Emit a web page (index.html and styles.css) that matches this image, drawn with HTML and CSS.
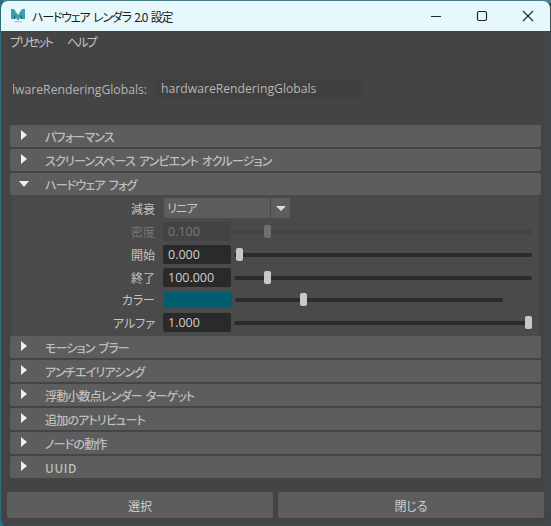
FILE: index.html
```html
<!DOCTYPE html>
<html lang="ja">
<head>
    <meta charset="UTF-8">
    <meta name="viewport" content="width=device-width, initial-scale=1.0">
    <title>ハードウェア レンダラ 2.0 設定</title>
    <link rel="stylesheet" href="styles.css">
</head>
<body>
    <div class="ventana">
        <div class="titulo">
            <svg class="logo" width="14" height="14" viewBox="0 0 14 14">
                <path d="M0 0h3l4 6 4-6h3v10h-3V5L7 10.500 3 5v5H0z" fill="#35a3a8"/>
                <path d="M3 5l4 5.500L11 5v5H9.500V8L7 11.500 4.500 8v2H3z" fill="#1c6374"/>
                <rect x="3" y="12" width="8" height="1.500" fill="#a6d2d4"/>
            </svg>
            <span class="titulo-texto">ハードウェア レンダラ 2.0 設定</span>
            <div class="controles">
                <svg width="12" height="12" viewBox="0 0 12 12"><path d="M1 6.500h10" stroke="#222" stroke-width="1.200"/></svg>
                <svg width="12" height="12" viewBox="0 0 12 12"><rect x="1.500" y="1.500" width="9" height="9" rx="1.500" fill="none" stroke="#222" stroke-width="1.200"/></svg>
                <svg width="12" height="12" viewBox="0 0 12 12"><path d="M1 1l10 10M11 1L1 11" stroke="#222" stroke-width="1.100"/></svg>
            </div>
        </div>

        <div class="menu">
            <span>プリセット</span>
            <span>ヘルプ</span>
        </div>

        <div class="nodo">
            <span class="nodo-label"><span>hardwareRenderingGlobals:</span></span>
            <span class="nodo-campo">hardwareRenderingGlobals</span>
        </div>

        <div class="secciones">
            <div class="cabecera"><i class="flecha"></i>パフォーマンス</div>
            <div class="cabecera"><i class="flecha"></i>スクリーンスペース アンビエント オクルージョン</div>
            <div class="cabecera"><i class="flecha abierta"></i>ハードウェア フォグ</div>
            <div class="cuerpo">
                <div class="fila fila-combo">
                    <label>減衰</label>
                    <div class="combo">リニア</div>
                    <div class="combo-boton"><i class="flecha-mini"></i></div>
                </div>
                <div class="fila apagada">
                    <label>密度</label>
                    <div class="campo">0.100</div>
                    <div class="pista"><i class="mando mando-28"></i></div>
                </div>
                <div class="fila">
                    <label>開始</label>
                    <div class="campo">0.000</div>
                    <div class="pista"><i class="mando mando-0"></i></div>
                </div>
                <div class="fila">
                    <label>終了</label>
                    <div class="campo">100.000</div>
                    <div class="pista"><i class="mando mando-28"></i></div>
                </div>
                <div class="fila fila-color">
                    <label>カラー</label>
                    <div class="muestra"></div>
                    <div class="pista pista-corta"><i class="mando mando-color"></i></div>
                </div>
                <div class="fila fila-alfa">
                    <label>アルファ</label>
                    <div class="campo">1.000</div>
                    <div class="pista"><i class="mando mando-100"></i></div>
                </div>
            </div>
            <div class="cabecera"><i class="flecha"></i>モーション ブラー</div>
            <div class="cabecera"><i class="flecha"></i>アンチエイリアシング</div>
            <div class="cabecera"><i class="flecha"></i>浮動小数点レンダー ターゲット</div>
            <div class="cabecera"><i class="flecha"></i>追加のアトリビュート</div>
            <div class="cabecera"><i class="flecha"></i>ノードの動作</div>
            <div class="cabecera cabecera-uuid"><i class="flecha"></i>UUID</div>
        </div>

        <div class="botones">
            <button>選択</button>
            <button>閉じる</button>
        </div>
    </div>
</body>
</html>
```

FILE: styles.css
```css
* {
    box-sizing: border-box;
}
html, body {
    height: 100%;
}
body {
    margin: 0;
    padding: 1px;
    overflow: hidden;
    background-color: #3a4a50;
    background-image: linear-gradient(to right, #2c6d7b 0 3px, transparent 3px), linear-gradient(to bottom, #4a808c 0 3px, transparent 3px);
    font-family: "Noto Sans CJK JP", "Noto Sans", sans-serif;
    font-feature-settings: "palt";
    font-size: 12px;
    color: #c4c4c4;
}
.ventana {
    height: 524px;
    width: 549px;
    background-color: #444444;
    border-radius: 7px;
    overflow: hidden;
}
.titulo {
    display: flex;
    align-items: center;
    height: 30px;
    padding-left: 10px;
    background-color: #e6f8fb;
    color: #1c1c1c;
}
.logo {
    margin-right: 7px;
}
.titulo-texto {
    flex: 1;
    letter-spacing: -1.200px;
    word-spacing: 2px;
}
.controles {
    display: flex;
    gap: 34px;
    padding-right: 16px;
}
.menu {
    display: flex;
    gap: 15px;
    height: 24px;
    padding: 2px 0 0 9px;
    line-height: 18px;
    letter-spacing: -1.800px;
}
.nodo {
    display: flex;
    align-items: center;
    margin-top: 25px;
    height: 18px;
    padding-left: 12px;
    font-family: "Open Sans", sans-serif;
    font-size: 12.200px;
    color: #b4b4b4;
}
.nodo-label {
    display: flex;
    justify-content: flex-end;
    width: 134px;
    margin-right: 9px;
    overflow: hidden;
    white-space: nowrap;
}
.nodo-label span {
    flex: none;
}
.nodo-campo {
    width: 207px;
    height: 18px;
    line-height: 18px;
    padding-left: 5px;
    background-color: #404040;
    border-radius: 2px;
}
.secciones {
    margin: 27px 9px 0;
}
.cabecera {
    display: flex;
    align-items: center;
    height: 22px;
    margin-bottom: 2px;
    padding-left: 35px;
    position: relative;
    background-color: #5d5d5d;
    border-radius: 2px;
    font-weight: 500;
    letter-spacing: -0.800px;
    word-spacing: 2px;
    color: #bdbdbd;
}
.cabecera-uuid {
    letter-spacing: 0.600px;
}
.flecha {
    position: absolute;
    left: 11px;
    top: 5px;
    border-left: 6px solid #eeeeee;
    border-top: 5px solid transparent;
    border-bottom: 5px solid transparent;
}
.flecha.abierta {
    left: 9px;
    top: 8px;
    border-top: 6px solid #eeeeee;
    border-left: 5.500px solid transparent;
    border-right: 5.500px solid transparent;
    border-bottom: 0;
}
.cuerpo {
    height: 141px;
    margin: -2px 2px 0;
    padding-top: 3px;
    background-color: #4a4a4a;
}
.fila {
    display: flex;
    align-items: center;
    height: 19px;
    margin-bottom: 4px;
}
.fila label {
    width: 151px;
    padding-right: 8px;
    text-align: right;
    white-space: nowrap;
}
.campo {
    width: 68px;
    height: 19px;
    line-height: 19px;
    padding-left: 5px;
    background-color: #2a2a2a;
    border-radius: 2px;
    font-family: "Open Sans", sans-serif;
    font-size: 12.500px;
    color: #d0d0d0;
}
.pista {
    position: relative;
    width: 298px;
    height: 4px;
    margin-left: 3px;
    background-color: #2b2b2b;
    border-radius: 2px;
}
.pista-corta {
    width: 268px;
}
.mando {
    position: absolute;
    top: -4.500px;
    width: 7px;
    height: 13px;
    background-color: #c8c8c8;
    border-radius: 2px;
}
.mando-0 {
    left: 2px;
}
.mando-28 {
    left: 30px;
}
.mando-color {
    left: 65px;
}
.mando-100 {
    right: 0;
}
.fila-combo {
    height: 20px;
}
.combo {
    width: 106px;
    height: 20px;
    margin-left: 1px;
    padding-left: 3px;
    line-height: 20px;
    letter-spacing: -0.700px;
    background-color: #5d5d5d;
    border-radius: 2px 0 0 2px;
}
.combo-boton {
    display: flex;
    align-items: center;
    justify-content: center;
    width: 19px;
    height: 20px;
    margin-left: 1px;
    background-color: #5d5d5d;
    border-radius: 0 2px 2px 0;
}
.flecha-mini {
    border-top: 5px solid #dddddd;
    border-left: 5px solid transparent;
    border-right: 5px solid transparent;
}
.apagada label {
    color: #777777;
}
.apagada .campo {
    background-color: #434343;
    color: #7a7a7a;
}
.apagada .pista {
    background-color: #434343;
}
.apagada .mando {
    background-color: #6e6e6e;
}
.fila-color {
    height: 15px;
    margin: 5px 0 6px;
}
.muestra {
    width: 68px;
    height: 15px;
    margin-left: 1px;
    background-color: #015d70;
}
.botones {
    display: flex;
    gap: 5px;
    margin: 14px 6px 0;
}
button {
    flex: 1;
    height: 26px;
    padding: 0;
    border: 0;
    border-radius: 2px;
    background-color: #5d5d5d;
    font-family: inherit;
    font-feature-settings: inherit;
    font-size: 12px;
    color: #d0d0d0;
}
```
